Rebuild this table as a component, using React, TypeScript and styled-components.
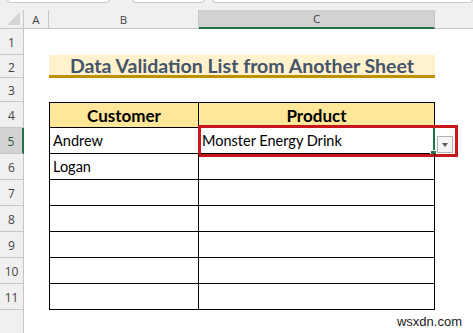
import styled, { createGlobalStyle } from "styled-components";

const GlobalStyle = createGlobalStyle`
  html, body {
    margin: 0;
    padding: 0;
    background: #ffffff;
    overflow: hidden;
  }
  body {
    font-family: Lato, "Open Sans", sans-serif;
  }
`;

const customers = ["Andrew", "Logan", "", "", "", "", ""];
const products = ["Monster Energy Drink", "", "", "", "", "", ""];

function App() {
  return (
    <Page>
      <GlobalStyle />
      <TopStrip>
        <NameBox $w={101} />
        <NameBox $w={71} />
        <NameBox $grow />
      </TopStrip>
      <Sheet>
        <Corner>
          <CornerTriangle />
        </Corner>
        <ColHeader>A</ColHeader>
        <ColHeader>B</ColHeader>
        <ColHeader $active>C</ColHeader>
        <ColHeader $last />

        {/* row 1 */}
        <RowHeader>1</RowHeader>
        <Blank $span={4} />

        {/* row 2 */}
        <RowHeader>2</RowHeader>
        <Blank />
        <Title>Data Validation List from Another Sheet</Title>
        <Blank />

        {/* row 3 */}
        <RowHeader>3</RowHeader>
        <Blank $span={4} />

        {/* row 4 */}
        <RowHeader>4</RowHeader>
        <Blank />
        <TableHead $first>Customer</TableHead>
        <TableHead>Product</TableHead>
        <Blank />

        {customers.map((c, i) => (
          <Row key={i} index={i} customer={c} product={products[i]} />
        ))}

        <RowHeader $end />
        <Blank $span={4} />
      </Sheet>
      <Watermark>wsxdn.com</Watermark>
    </Page>
  );
}

function Row({
  index,
  customer,
  product,
}: {
  index: number;
  customer: string;
  product: string;
}) {
  const selected = index === 0;
  return (
    <>
      <RowHeader $active={selected}>{index + 5}</RowHeader>
      <Blank />
      <TableCell $first>{customer}</TableCell>
      <TableCell>
        {product}
        {selected && (
          <>
            <Selection>
              <FillHandle />
            </Selection>
            <DropButton>
              <DropArrow />
            </DropButton>
            <Highlight />
          </>
        )}
      </TableCell>
      <Blank />
    </>
  );
}

const Page = styled.div`
  position: relative;
  width: 473px;
  height: 333px;
  overflow: hidden;
  background: #ffffff;
`;

const TopStrip = styled.div`
  height: 10px;
  background: #f0f0f0;
  display: flex;
  gap: 7px;
  padding: 0 0 0 7px;
  box-sizing: border-box;
  & > :nth-child(2) {
    margin-left: 15px;
  }
`;

const NameBox = styled.div<{ $w?: number; $grow?: boolean }>`
  width: ${(p) => (p.$w ? `${p.$w}px` : "auto")};
  flex: ${(p) => (p.$grow ? 1 : "none")};
  height: 3px;
  margin-top: -1px;
  background: #ffffff;
  border: 1px solid #c8c8c8;
  border-top: none;
  border-radius: 0 0 4px 4px;
`;

const Sheet = styled.div`
  display: grid;
  grid-template-columns: 24px 25px 150px 236px 1fr;
  grid-template-rows: 19px 26px 23px 24px repeat(8, 26px) 1fr;
  height: 323px;
`;

const Corner = styled.div`
  background: #f0f0f0;
  border-right: 1px solid #c6c6c6;
  border-bottom: 1px solid #c6c6c6;
  position: relative;
`;

const CornerTriangle = styled.div`
  position: absolute;
  right: 3px;
  bottom: 3px;
  width: 0;
  height: 0;
  border-left: 13px solid transparent;
  border-bottom: 13px solid #d5d5d5;
`;

const ColHeader = styled.div<{ $active?: boolean; $last?: boolean }>`
  display: flex;
  align-items: center;
  justify-content: center;
  font-family: "Open Sans", sans-serif;
  font-size: 11.5px;
  color: #444444;
  background: ${(p) => (p.$active ? "#d2d2d2" : "#f0f0f0")};
  border-right: ${(p) => (p.$last ? "none" : "1px solid #c6c6c6")};
  border-bottom: ${(p) =>
    p.$active ? "2px solid #217346" : "1px solid #c6c6c6"};
  box-sizing: border-box;
`;

const RowHeader = styled.div<{ $active?: boolean; $end?: boolean }>`
  display: flex;
  align-items: center;
  justify-content: center;
  padding-top: 2px;
  font-family: "Open Sans", sans-serif;
  font-size: 12px;
  color: ${(p) => (p.$active ? "#2b5a3e" : "#444444")};
  background: ${(p) => (p.$active ? "#d2d2d2" : "#f0f0f0")};
  border-right: ${(p) =>
    p.$active ? "2px solid #217346" : "1px solid #c6c6c6"};
  border-bottom: ${(p) => (p.$end ? "none" : "1px solid #c6c6c6")};
  box-sizing: border-box;
`;

const Blank = styled.div<{ $span?: number }>`
  grid-column: ${(p) => (p.$span ? `span ${p.$span}` : "auto")};
  background: #ffffff;
`;

const Title = styled.div`
  grid-column: span 2;
  display: flex;
  align-items: center;
  justify-content: center;
  background: #fff2cc;
  border-bottom: 3px solid #bf9000;
  font-weight: 700;
  font-size: 19.5px;
  color: #44546a;
  padding-top: 1px;
  box-sizing: border-box;
  white-space: nowrap;
`;

const TableHead = styled.div<{ $first?: boolean }>`
  display: flex;
  align-items: center;
  justify-content: center;
  background: #ffe699;
  font-weight: 700;
  font-size: 17px;
  color: #000000;
  border-top: 1px solid #000;
  border-bottom: 1px solid #000;
  border-right: 1px solid #000;
  border-left: ${(p) => (p.$first ? "1px solid #000" : "none")};
  box-sizing: border-box;
`;

const TableCell = styled.div<{ $first?: boolean }>`
  position: relative;
  display: flex;
  align-items: center;
  padding-left: 3px;
  font-size: 14.5px;
  color: #000000;
  border-bottom: 1px solid #000;
  border-right: 1px solid #000;
  border-left: ${(p) => (p.$first ? "1px solid #000" : "none")};
  box-sizing: border-box;
  white-space: nowrap;
`;

const Selection = styled.div`
  position: absolute;
  top: 0;
  right: -1px;
  bottom: 0;
  width: 2px;
  background: #217346;
  pointer-events: none;
`;

const FillHandle = styled.div`
  position: absolute;
  right: -2px;
  bottom: -4px;
  width: 5px;
  height: 5px;
  background: #217346;
  border: 1px solid #ffffff;
`;

const DropButton = styled.div`
  position: absolute;
  left: 238px;
  top: 8px;
  width: 16px;
  height: 17px;
  box-sizing: border-box;
  background: #f5f5f5;
  border: 1px solid #b4b4b4;
  display: flex;
  align-items: center;
  justify-content: center;
`;

const DropArrow = styled.div`
  width: 0;
  height: 0;
  border-left: 3.5px solid transparent;
  border-right: 3.5px solid transparent;
  border-top: 4px solid #5a5a5a;
`;

const Highlight = styled.div`
  position: absolute;
  top: -3px;
  left: -1px;
  width: 260px;
  height: 32px;
  box-sizing: border-box;
  border: 3px solid #c8161d;
  pointer-events: none;
`;

const Watermark = styled.div`
  position: absolute;
  right: 11px;
  bottom: 4px;
  font-family: "Liberation Sans", Arial, sans-serif;
  font-size: 13px;
  color: #1a1a1a;
`;

export default App;
